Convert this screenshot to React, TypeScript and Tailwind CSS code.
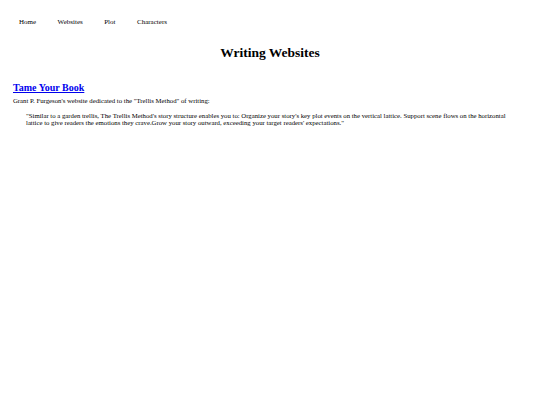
import React from "react";

const navLinks = ["Home", "Websites", "Plot", "Characters"];

export default function App() {
  return (
    <div className="min-h-screen bg-white text-black font-['Liberation_Serif',serif] text-[6.75px] leading-[7.7px]">
      <nav className="flex gap-[21.5px] pl-[19px] pt-[19px] text-[7px]">
        {navLinks.map((link) => (
          <span key={link}>{link}</span>
        ))}
      </nav>

      <h1 className="mt-[18px] text-center text-[13.5px] leading-[16px] font-bold">Writing Websites</h1>

      <section className="px-[13px] mt-[21px]">
        <h2 className="text-[10px] leading-[12px] font-bold">
          <a href="#" className="text-[#0000ee] underline">Tame Your Book</a>
        </h2>
        <p className="mt-[3px]">Grant P. Furgeson's website dedicated to the "Trellis Method" of writing:</p>
        <blockquote className="mt-[8px] ml-[13px] mr-[21px] leading-[7px]">
          "Similar to a garden trellis, The Trellis Method's story structure enables you to: Organize your story's key plot events on the vertical lattice. Support scene flows on the horizontal lattice to give readers the emotions they crave.Grow your story outward, exceeding your target readers' expectations."
        </blockquote>
      </section>
    </div>
  );
}
